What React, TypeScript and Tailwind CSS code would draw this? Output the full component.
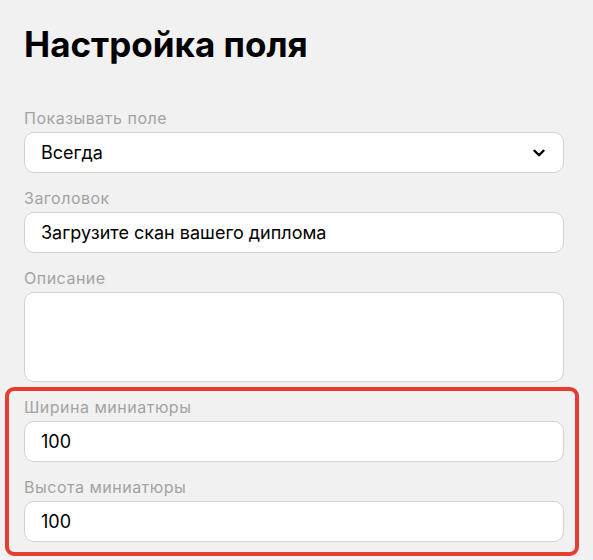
// Field settings panel — a short form with a highlighted thumbnail-size group.

import { ChevronDown } from "lucide-react";

const labelCls = "block h-6 text-[16px] leading-6 tracking-[0.5px] text-[#a3a3a3] mb-[2px]";
const boxCls =
  "w-full rounded-[10px] border border-[#d2d2d2] bg-white px-4 text-[18px] text-black outline-none";

function Field({ label, children }: { label: string; children: React.ReactNode }) {
  return (
    <div>
      <span className={labelCls}>{label}</span>
      {children}
    </div>
  );
}

export default function App() {
  return (
    <div
      className="min-h-[560px] bg-[#f1f1f1] pl-6 pt-6"
      style={{ fontFamily: "Inter, 'Noto Sans', sans-serif" }}
    >
      <h1 className="text-[35px] font-bold leading-[41px] text-black">Настройка поля</h1>

      <div className="mt-[41px] flex w-[540px] flex-col gap-[13px]">
        <Field label="Показывать поле">
          <div className={`${boxCls} flex h-[41px] items-center justify-between pr-[15px]`}>
            <span>Всегда</span>
            <ChevronDown size={18} strokeWidth={3.2} />
          </div>
        </Field>

        <Field label="Заголовок">
          <div className={`${boxCls} flex h-[41px] items-center`}>Загрузите скан вашего диплома</div>
        </Field>

        <Field label="Описание">
          <div className={`${boxCls} h-[90px]`} />
        </Field>

        <div className="relative flex flex-col gap-[13px]">
          {/* highlight annotation drawn over the group */}
          <div className="pointer-events-none absolute -top-[8px] -bottom-[14px] -left-[19px] -right-[15px] rounded-[9px] border-4 border-[#e53e30]" />
          <Field label="Ширина миниатюры">
            <div className={`${boxCls} flex h-[41px] items-center`}>100</div>
          </Field>
          <Field label="Высота миниатюры">
            <div className={`${boxCls} flex h-[41px] items-center`}>100</div>
          </Field>
        </div>
      </div>
    </div>
  );
}
